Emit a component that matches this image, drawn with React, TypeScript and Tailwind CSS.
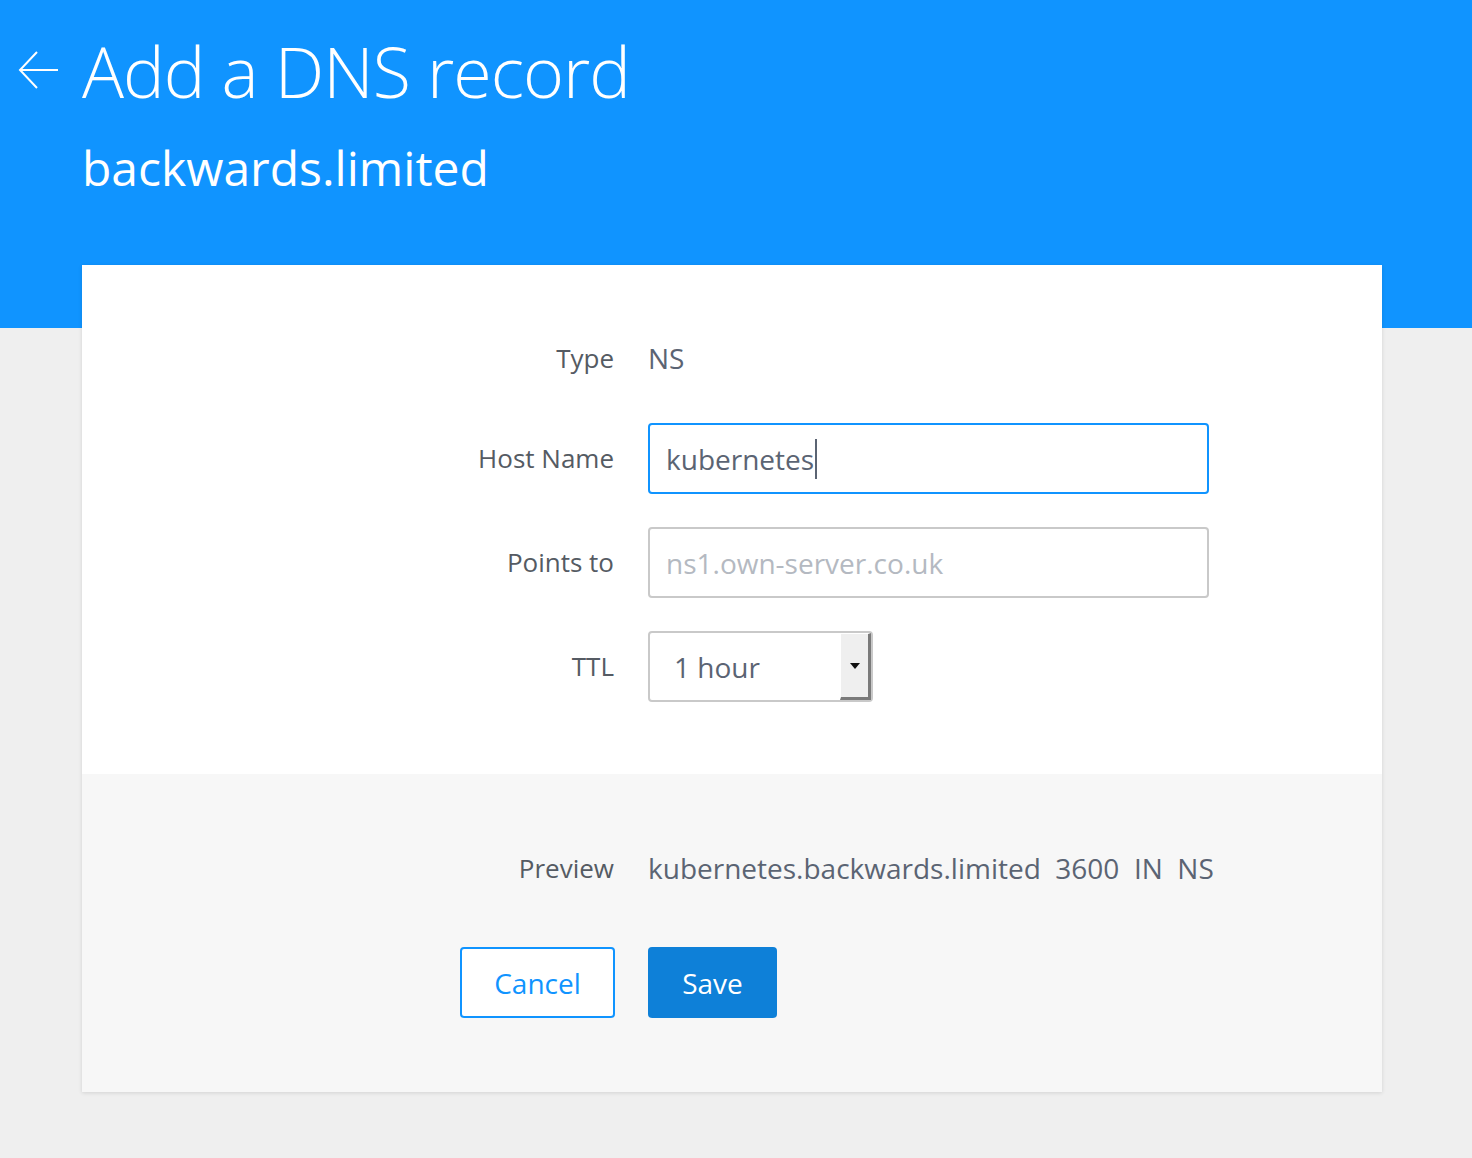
export default function App() {
  return (
    <div className="min-h-[1158px] w-full bg-[#efefef] font-['Open_Sans',sans-serif]">
      <header className="h-[328px] bg-[#1094ff] text-white">
        <div className="flex items-center pt-[26px]">
          <svg width="82" height="90" viewBox="0 0 82 90" className="shrink-0" fill="none" stroke="white" strokeWidth="2">
            <path d="M20 44 H58 M37 26 L20 44 L37 62" />
          </svg>
          <h1 className="text-[70px] font-light leading-[90px] tracking-[-1px]">Add a DNS record</h1>
        </div>
        <div className="pl-[82px] pt-[22px] text-[48px] leading-[60px]">backwards.limited</div>
      </header>

      <div className="-mt-[63px] ml-[82px] w-[1300px] bg-white shadow-[0_1px_4px_rgba(0,0,0,0.12)]">
        <div className="flex flex-col gap-[33px] pt-[61px] pb-[72px]">
          <Row label="Type">
            <div className="h-[64px] flex items-center text-[28px] text-[#5b6473]">NS</div>
          </Row>
          <Row label="Host Name">
            <div className="h-[71px] w-[561px] rounded-[4px] border-2 border-[#1094ff] flex items-center pl-[16px] text-[28px] text-[#5b6473]">
              kubernetes<span className="ml-[1px] inline-block h-[40px] w-[2px] bg-[#5b6473]" />
            </div>
          </Row>
          <Row label="Points to">
            <div className="h-[71px] w-[561px] rounded-[4px] border-2 border-[#c9c9c9] flex items-center pl-[16px] text-[28px] text-[#b4b9c1]">
              ns1.own-server.co.uk
            </div>
          </Row>
          <Row label="TTL">
            <div className="h-[71px] w-[225px] rounded-[4px] border-2 border-[#c9c9c9] flex items-stretch text-[28px] text-[#5b6473]">
              <div className="flex-1 flex items-center pl-[24px]">1 hour</div>
              <div className="w-[31px] bg-[#efefef] border-r-[3px] border-b-[3px] border-r-[#7a7a7a] border-b-[#7a7a7a] border-t border-l border-t-white border-l-white flex items-center justify-center">
                <svg width="10" height="6" viewBox="0 0 10 6"><path d="M0 0 H10 L5 6 Z" fill="#111" /></svg>
              </div>
            </div>
          </Row>
        </div>
        <div className="bg-[#f7f7f7] pt-[73px] pb-[74px]">
          <Row label="Preview">
            <div className="text-[28px] text-[#5b6473] whitespace-pre">kubernetes.backwards.limited  3600  IN  NS</div>
          </Row>
          <div className="mt-[58px] flex gap-[33px] pl-[378px]">
            <button className="h-[71px] w-[155px] rounded-[4px] border-2 border-[#1094ff] bg-white text-[28px] text-[#1094ff]">Cancel</button>
            <button className="h-[71px] w-[129px] rounded-[4px] bg-[#0e80d8] text-[28px] text-white">Save</button>
          </div>
        </div>
      </div>
    </div>
  );
}

function Row({ label, children }: { label: string; children: React.ReactNode }) {
  return (
    <div className="flex items-center gap-[34px]">
      <div className="w-[532px] text-right text-[26px] text-[#555b63]">{label}</div>
      {children}
    </div>
  );
}
